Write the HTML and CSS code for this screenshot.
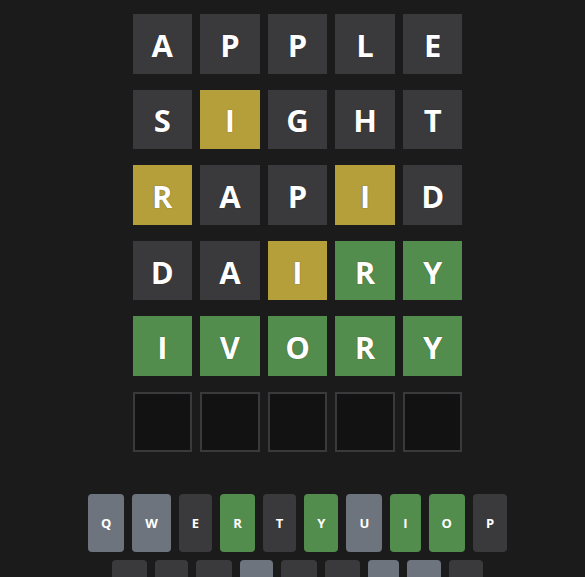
FILE: index.html
```html
<!DOCTYPE html>
<html>
<head>
<meta charset="utf-8">
<link rel="stylesheet" href="styles.css">
</head>
<body>
<div class="app">
  <div class="board">
    <div class="row">
      <div class="tile absent">A</div><div class="tile absent">P</div><div class="tile absent">P</div><div class="tile absent">L</div><div class="tile absent">E</div>
    </div>
    <div class="row">
      <div class="tile absent">S</div><div class="tile present">I</div><div class="tile absent">G</div><div class="tile absent">H</div><div class="tile absent">T</div>
    </div>
    <div class="row">
      <div class="tile present">R</div><div class="tile absent">A</div><div class="tile absent">P</div><div class="tile present">I</div><div class="tile absent">D</div>
    </div>
    <div class="row">
      <div class="tile absent">D</div><div class="tile absent">A</div><div class="tile present">I</div><div class="tile correct">R</div><div class="tile correct">Y</div>
    </div>
    <div class="row">
      <div class="tile correct">I</div><div class="tile correct">V</div><div class="tile correct">O</div><div class="tile correct">R</div><div class="tile correct">Y</div>
    </div>
    <div class="row">
      <div class="tile empty"></div><div class="tile empty"></div><div class="tile empty"></div><div class="tile empty"></div><div class="tile empty"></div>
    </div>
  </div>
  <div class="keyboard">
    <div class="krow">
      <button class="key">Q</button><button class="key">W</button><button class="key k-absent">E</button><button class="key k-correct">R</button><button class="key k-absent">T</button><button class="key k-correct">Y</button><button class="key">U</button><button class="key k-correct">I</button><button class="key k-correct">O</button><button class="key k-absent">P</button>
    </div>
    <div class="krow">
      <button class="key k-absent">A</button><button class="key k-absent">S</button><button class="key k-absent">D</button><button class="key">F</button><button class="key k-absent">G</button><button class="key k-absent">H</button><button class="key">J</button><button class="key">K</button><button class="key k-absent">L</button>
    </div>
  </div>
</div>
</body>
</html>
```
FILE: styles.css
```css
html, body {
  margin: 0;
  padding: 0;
  background: #1b1b1b;
  height: 100%;
  overflow: hidden;
}
.app {
  font-family: "Open Sans", "Noto Sans", sans-serif;
  padding: 14px 0 0 10px;
  display: flex;
  flex-direction: column;
  align-items: center;
}
.board {
  display: flex;
  flex-direction: column;
  gap: 16px;
  width: 330px;
}
.row {
  display: grid;
  grid-template-columns: repeat(5, 1fr);
  column-gap: 8px;
}
.tile {
  height: 59.6px;
  box-sizing: border-box;
  display: flex;
  align-items: center;
  justify-content: center;
  color: #ffffff;
  font-weight: 700;
  font-size: 31px;
  padding-top: 2px;
  text-shadow: 0 0 1px rgba(0,0,0,0.6);
}
.absent { background: #3a3a3c; }
.present { background: #b59f3b; }
.correct { background: #538d4e; }
.empty {
  background: #121213;
  border: 2px solid #3a3a3c;
}
.keyboard {
  margin-top: 42px;
  display: flex;
  flex-direction: column;
  align-items: center;
  gap: 8px;
}
.krow {
  display: flex;
  gap: 8px;
}
.key {
  font-family: "Open Sans", "Noto Sans", sans-serif;
  font-weight: 700;
  font-size: 13px;
  color: #ffffff;
  height: 58px;
  padding: 0 13px;
  border: none;
  border-radius: 4px;
  background: #6e747d;
  display: flex;
  align-items: center;
  justify-content: center;
}
.k-absent { background: #3a3a3c; }
.k-correct { background: #538d4e; }
```
